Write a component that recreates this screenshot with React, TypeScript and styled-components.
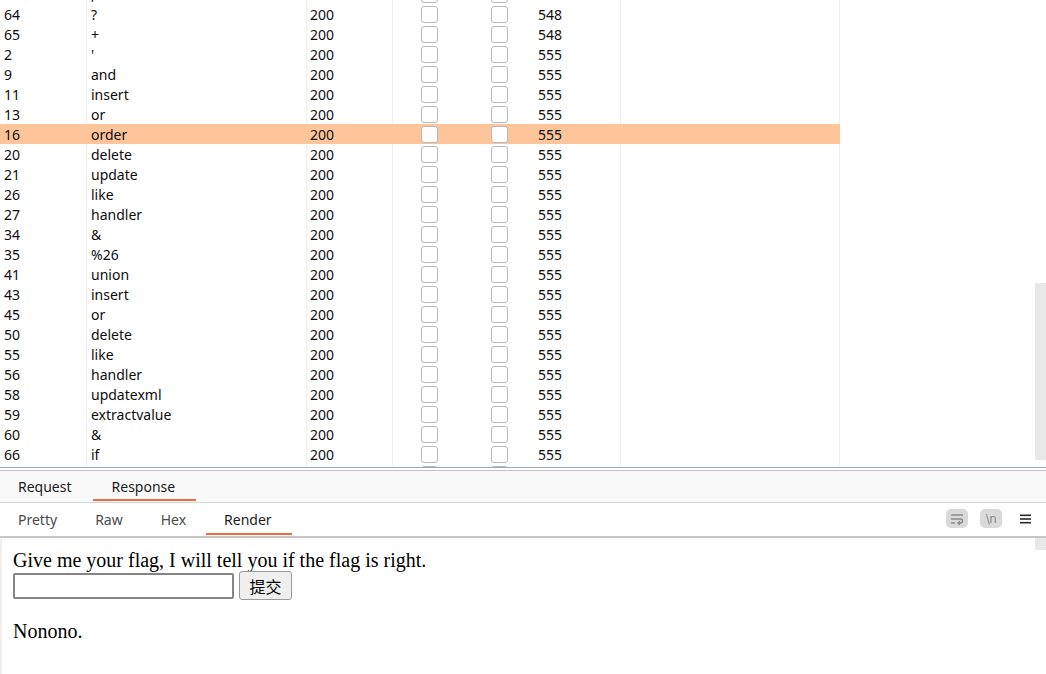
import React from "react";
import styled, { createGlobalStyle } from "styled-components";

const GlobalStyle = createGlobalStyle`
  html, body { margin: 0; padding: 0; background: #fff; }
  body { overflow: hidden; }
  * { box-sizing: border-box; }
`;

const Shell = styled.div`
  width: 1046px;
  height: 674px;
  display: flex;
  flex-direction: column;
  overflow: hidden;
  background: #fff;
  font-family: "Noto Sans", "Open Sans", sans-serif;
  color: #111;
`;

const TopPane = styled.div`
  height: 467px;
  display: flex;
  flex-shrink: 0;
  overflow: hidden;
`;

const Viewport = styled.div`
  flex: 1;
  overflow: hidden;
`;

const RowList = styled.div`
  margin-top: -16px;
`;

const Row = styled.div<{ $selected?: boolean }>`
  display: grid;
  grid-template-columns: 87px 220px 86px 73px 67px 88px 219px;
  width: 840px;
  height: 20px;
  background: ${(p) => (p.$selected ? "#fec59a" : "#fff")};
  font-size: 14px;
  line-height: 20px;
  color: #0d0d0d;
`;

const Cell = styled.div<{ $line?: boolean; $selected?: boolean; $pad?: number; $center?: boolean }>`
  display: flex;
  align-items: center;
  justify-content: ${(p) => (p.$center ? "center" : "flex-start")};
  padding-left: ${(p) => p.$pad ?? 0}px;
  padding-top: ${(p) => (p.$center ? 0 : 1)}px;
  white-space: nowrap;
  overflow: hidden;
  border-right: 1px solid
    ${(p) => (p.$line && !p.$selected ? "#efefef" : "transparent")};
`;

const Check = styled.span`
  display: block;
  width: 17px;
  height: 17px;
  margin-top: 1px;
  border: 1.5px solid #b8b8b8;
  border-radius: 3px;
  background: #fff;
`;

const ScrollTrack = styled.div`
  width: 11px;
  flex-shrink: 0;
  padding-top: 283px;
`;

const ScrollThumb = styled.div<{ $h: number }>`
  height: ${(p) => p.$h}px;
  background: #e8e8e8;
`;

const Splitter = styled.div`
  height: 4px;
  flex-shrink: 0;
  border-top: 1px solid #93a9c8;
  border-bottom: 1px solid #cbbcbd;
  background: #fff;
`;

const MainTabs = styled.div`
  height: 32px;
  flex-shrink: 0;
  display: flex;
  background: #f9f9f9;
  border-bottom: 1px solid #d2d8d8;
`;

const SubTabs = styled.div`
  height: 35px;
  flex-shrink: 0;
  display: flex;
  align-items: stretch;
  background: #fff;
  border-bottom: 2px solid #c6c6c6;
`;

const Tab = styled.div<{ $active?: boolean; $muted?: boolean }>`
  display: flex;
  align-items: center;
  padding: 2px 20px 0 18px;
  margin-bottom: 1px;
  font-size: 14px;
  color: ${(p) => (p.$muted ? "#4a4a4a" : "#1c1c1c")};
  border-bottom: 2px solid ${(p) => (p.$active ? "#ef6b3e" : "transparent")};
`;

const MainTab = styled(Tab)`
  padding: 2px 21px 0 19px;
  &:first-child {
    padding-left: 18px;
  }
`;

const Tools = styled.div`
  margin-left: auto;
  display: flex;
  align-items: center;
  padding-right: 15px;
  padding-bottom: 2px;
`;

const IconBox = styled.div<{ $gap?: number }>`
  width: 22px;
  height: 19px;
  margin-right: ${(p) => p.$gap ?? 0}px;
  border-radius: 5px;
  background: #d9d9d9;
  display: flex;
  align-items: center;
  justify-content: center;
  color: #8a8a8a;
  font-size: 12px;
  font-family: "DejaVu Sans", sans-serif;
  letter-spacing: -0.5px;
`;

const RenderArea = styled.div`
  flex: 1;
  display: flex;
`;

const Page = styled.div`
  flex: 1;
  border-left: 2px solid #efefef;
  padding: 11px 0 0 11px;
  font-family: "Liberation Serif", "Noto Sans CJK SC", serif;
  font-size: 20px;
  line-height: 22px;
  color: #000;
`;

const Line = styled.div<{ $top?: number }>`
  margin-top: ${(p) => p.$top ?? 0}px;
  height: 22px;
`;

const FormRow = styled.form`
  display: flex;
  align-items: center;
  gap: 5px;
  height: 29px;
  margin: 0;
`;

const TextInput = styled.input`
  width: 221px;
  height: 26px;
  border: 2px solid #858585;
  border-radius: 2px;
  background: #fff;
  outline: none;
`;

const Submit = styled.button`
  width: 53px;
  height: 29px;
  padding: 0;
  border: 1px solid #9a9a9a;
  border-radius: 3px;
  background: #efefef;
  font-family: "Noto Sans CJK SC", sans-serif;
  font-size: 16px;
  color: #000;
`;

const SideStrip = styled.div`
  width: 11px;
  flex-shrink: 0;
`;

type R = { id: string; payload: string; len: string; selected?: boolean };

const rows: R[] = [
  { id: "63", payload: ",", len: "548" },
  { id: "64", payload: "?", len: "548" },
  { id: "65", payload: "+", len: "548" },
  { id: "2", payload: "'", len: "555" },
  { id: "9", payload: "and", len: "555" },
  { id: "11", payload: "insert", len: "555" },
  { id: "13", payload: "or", len: "555" },
  { id: "16", payload: "order", len: "555", selected: true },
  { id: "20", payload: "delete", len: "555" },
  { id: "21", payload: "update", len: "555" },
  { id: "26", payload: "like", len: "555" },
  { id: "27", payload: "handler", len: "555" },
  { id: "34", payload: "&", len: "555" },
  { id: "35", payload: "%26", len: "555" },
  { id: "41", payload: "union", len: "555" },
  { id: "43", payload: "insert", len: "555" },
  { id: "45", payload: "or", len: "555" },
  { id: "50", payload: "delete", len: "555" },
  { id: "55", payload: "like", len: "555" },
  { id: "56", payload: "handler", len: "555" },
  { id: "58", payload: "updatexml", len: "555" },
  { id: "59", payload: "extractvalue", len: "555" },
  { id: "60", payload: "&", len: "555" },
  { id: "66", payload: "if", len: "555" },
  { id: "67", payload: "select", len: "555" },
];

const WrapIcon = () => (
  <svg width="14" height="12" viewBox="0 0 14 12" fill="none" stroke="#8a8a8a" strokeWidth="1.4" strokeLinecap="round" strokeLinejoin="round">
    <path d="M1.5 2h11" />
    <path d="M1.5 6h9a2 2 0 0 1 0 4H8" />
    <path d="M9.5 8.5 8 10l1.5 1.5" />
    <path d="M1.5 10h3" />
  </svg>
);

const MenuIcon = () => (
  <svg width="11" height="10" viewBox="0 0 11 10" fill="#2b2b2b">
    <rect x="0" y="0.5" width="11" height="1.6" />
    <rect x="0" y="4.2" width="11" height="1.6" />
    <rect x="0" y="7.9" width="11" height="1.6" />
  </svg>
);

export default function App() {
  return (
    <Shell>
      <GlobalStyle />
      <TopPane>
        <Viewport>
          <RowList>
            {rows.map((r, i) => (
              <Row key={i} $selected={r.selected}>
                <Cell $line $selected={r.selected} $pad={4}>{r.id}</Cell>
                <Cell $line $selected={r.selected} $pad={4}>{r.payload}</Cell>
                <Cell $line $selected={r.selected} $pad={3}>200</Cell>
                <Cell $center>
                  <Check />
                </Cell>
                <Cell $center>
                  <Check />
                </Cell>
                <Cell $line $selected={r.selected} $pad={5}>{r.len}</Cell>
                <Cell $line $selected={r.selected} />
              </Row>
            ))}
          </RowList>
        </Viewport>
        <ScrollTrack>
          <ScrollThumb $h={177} />
        </ScrollTrack>
      </TopPane>
      <Splitter />
      <MainTabs>
        <MainTab>Request</MainTab>
        <MainTab $active>Response</MainTab>
      </MainTabs>
      <SubTabs>
        <Tab $muted>Pretty</Tab>
        <Tab $muted>Raw</Tab>
        <Tab $muted>Hex</Tab>
        <Tab $active>Render</Tab>
        <Tools>
          <IconBox $gap={12}>
            <WrapIcon />
          </IconBox>
          <IconBox $gap={18}>\n</IconBox>
          <MenuIcon />
        </Tools>
      </SubTabs>
      <RenderArea>
        <Page>
          <Line>Give me your flag, I will tell you if the flag is right.</Line>
          <FormRow onSubmit={(e) => e.preventDefault()}>
            <TextInput type="text" />
            <Submit type="submit">提交</Submit>
          </FormRow>
          <Line $top={20}>Nonono.</Line>
        </Page>
        <SideStrip>
          <ScrollThumb $h={12} />
        </SideStrip>
      </RenderArea>
    </Shell>
  );
}
